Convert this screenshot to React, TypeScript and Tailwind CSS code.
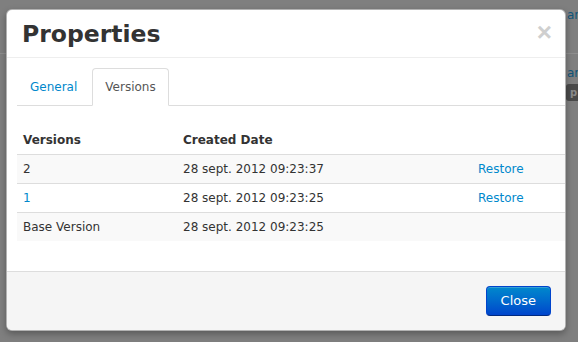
import React from "react";

const rows = [
  { version: "2", date: "28 sept. 2012 09:23:37", restore: true, link: false },
  { version: "1", date: "28 sept. 2012 09:23:25", restore: true, link: true },
  { version: "Base Version", date: "28 sept. 2012 09:23:25", restore: false, link: false },
];

const App = () => {
  return (
    <div className="relative w-[578px] h-[342px] overflow-hidden bg-[#7f7f7f] font-['DejaVu_Sans',sans-serif] text-[#333]">
      {/* page behind the backdrop */}
      <div className="flex flex-col">
        <div className="h-[54px] border-b border-[#8e8e8e] pl-[567px] pt-[8px] text-[12px] leading-[14px] text-[#10557a] whitespace-nowrap overflow-hidden">
          ar
        </div>
        <div className="pl-[567px] pt-[12px] text-[12px] leading-[14px] text-[#10557a] whitespace-nowrap overflow-hidden">
          ar
        </div>
        <div className="pl-[566px] pt-[4px]">
          <div className="h-[17px] w-[20px] rounded-[3px] bg-[#4a4a4a] pl-[4px] text-[10px] leading-[17px] font-bold text-[#8a8a8a]">
            p
          </div>
        </div>
      </div>

      {/* modal */}
      <div className="absolute left-[6px] top-[9px] w-[560px] flex flex-col rounded-[6px] border border-black/30 bg-white shadow-[0_3px_7px_rgba(0,0,0,0.3)] overflow-hidden">
        <div className="h-[48px] flex items-center justify-between pl-[15px] pr-[13px] border-b border-[#eee]">
          <h3 className="text-[23.5px] font-bold leading-[30px] text-[#333] mt-[1px]">Properties</h3>
          <span className="font-['Liberation_Sans',sans-serif] text-[26px] font-bold leading-[20px] text-[#cfcfcf] mb-[3px]">×</span>
        </div>

        <div className="pl-[10px] pt-[10px] pb-[30px]">
          <ul className="flex border-b border-[#ddd] text-[12px] leading-[18px]">
            <li className="-mb-px mr-[2px]">
              <a className="block px-[12px] py-[9px] border border-transparent rounded-t-[4px] text-[#0088cc]">
                General
              </a>
            </li>
            <li className="-mb-px">
              <a className="block px-[12px] py-[9px] border border-[#ddd] border-b-white rounded-t-[4px] bg-white text-[#555]">
                Versions
              </a>
            </li>
          </ul>

          <table className="mt-[20px] w-[550px] table-fixed border-collapse text-[12px] leading-[18px]">
            <thead>
              <tr>
                <th className="w-[160px] px-[6px] py-[5px] text-left font-bold">Versions</th>
                <th className="w-[295px] px-[6px] py-[5px] text-left font-bold">Created Date</th>
                <th className="px-[6px] py-[5px] text-left"></th>
              </tr>
            </thead>
            <tbody>
              {rows.map((r, i) => (
                <tr key={i} className={i % 2 === 0 ? "bg-[#f9f9f9]" : "bg-white"}>
                  <td className={"border-t border-[#ddd] px-[6px] py-[5px] " + (r.link ? "text-[#0088cc]" : "")}>
                    {r.version}
                  </td>
                  <td className="border-t border-[#ddd] px-[6px] py-[5px]">{r.date}</td>
                  <td className="border-t border-[#ddd] px-[6px] py-[5px] text-[#0088cc]">
                    {r.restore ? "Restore" : ""}
                  </td>
                </tr>
              ))}
            </tbody>
          </table>
        </div>

        <div className="flex justify-end border-t border-[#ddd] bg-[#f5f5f5] px-[14px] py-[14px]">
          <button className="h-[30px] px-[14px] rounded-[4px] border border-[#0044cc] border-b-[#002a80] bg-gradient-to-b from-[#0088cc] to-[#0044cc] text-[13px] text-white shadow-[inset_0_1px_0_rgba(255,255,255,0.2)]">
            Close
          </button>
        </div>
      </div>
    </div>
  );
};

export default App;
